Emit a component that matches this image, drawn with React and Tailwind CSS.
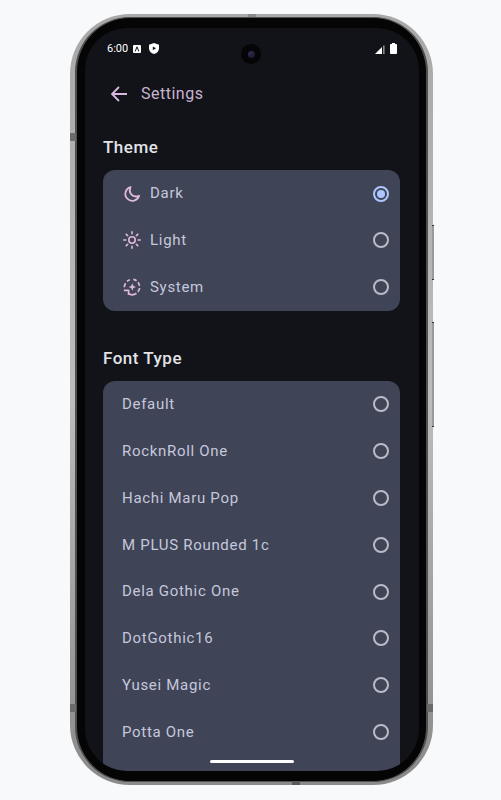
const FONTS = [
  "Default",
  "RocknRoll One",
  "Hachi Maru Pop",
  "M PLUS Rounded 1c",
  "Dela Gothic One",
  "DotGothic16",
  "Yusei Magic",
  "Potta One",
];

function MoonIcon() {
  return (
    <svg width="20" height="20" viewBox="0 0 20 20" fill="none" stroke="#e0b9d8" strokeWidth="1.8">
      <path d="M8.600 3a7 7 0 1 0 8.500 8.700c-.9.500-1.900.8-3 .8A6.300 6.300 0 0 1 8.600 3Z" strokeLinejoin="round" />
    </svg>
  );
}

function SunIcon() {
  return (
    <svg width="20" height="20" viewBox="0 0 20 20" fill="none" stroke="#e0b9d8" strokeWidth="1.600" strokeLinecap="round">
      <circle cx="10" cy="10" r="3.200" />
      <path d="M10 1.800v2M10 16.200v2M1.800 10h2M16.200 10h2M4.200 4.200l1.400 1.400M14.400 14.400l1.400 1.400M4.200 15.800l1.400-1.400M14.400 5.600l1.400-1.400" />
    </svg>
  );
}

function SystemIcon() {
  return (
    <svg width="20" height="20" viewBox="0 0 20 20" fill="none" stroke="#e0b9d8" strokeWidth="1.700">
      <path d="M2.300 10.200a7.700 7.700 0 0 1 1.300-4M5 4.400a7.700 7.700 0 0 1 2.900-1.600M11.300 2.400a7.700 7.700 0 0 1 3.300 1.400M16 5.300a7.700 7.700 0 0 1 1.500 3.600M17.600 11a7.700 7.700 0 0 1-1.700 3.900M14.500 16.300a7.700 7.700 0 0 1-8.400.300" />
      <path d="M1.900 13.300h4.700v4.500" strokeLinejoin="round" />
      <path d="M10.300 6.200l1.100 2.700 2.700 1.100-2.700 1.100-1.100 2.700-1.100-2.700-2.700-1.100 2.700-1.100Z" fill="#e0b9d8" stroke="none" />
    </svg>
  );
}

function Radio({ checked }) {
  if (checked) {
    return (
      <span className="flex h-4 w-4 items-center justify-center rounded-full border-2 border-[#adc6ff]">
        <span className="h-2 w-2 rounded-full bg-[#adc6ff]"></span>
      </span>
    );
  }
  return <span className="h-4 w-4 rounded-full border-2 border-[#b9bbc6]"></span>;
}

function Row({ icon, label, checked }) {
  return (
    <div className="flex h-[46.8px] shrink-0 items-center pl-[19px] pr-[11px]">
      {icon ? <span className="mr-[8px] flex h-5 w-5 items-center justify-center">{icon}</span> : null}
      <span className="flex-1 text-[15px] tracking-[0.7px] text-[#c5c8dc]">{label}</span>
      <Radio checked={checked} />
    </div>
  );
}

export default function App() {
  return (
    <div className="h-screen overflow-hidden bg-[#f8f9fb] pt-[14px] pl-[70px] font-['Roboto',sans-serif]">
      <div className="relative h-[771px] w-[363px] rounded-[60px] bg-gradient-to-b from-[#a8a8a8] via-[#bcbcbc] to-[#8a8a8a] px-[5px] py-[3px]">
        {/* side buttons and antenna bands */}
        <div className="absolute -right-[1px] top-[211px] h-[55px] w-[2px] border-y border-[#333] bg-[#9a9a9a]"></div>
        <div className="absolute -right-[1px] top-[308px] h-[105px] w-[2px] border-y border-[#333] bg-[#9a9a9a]"></div>
        <div className="absolute left-0 top-[119px] h-2 w-[6px] bg-[#6a6a6a]"></div>
        <div className="absolute left-0 top-[690px] h-2 w-[6px] bg-[#6a6a6a]"></div>
        <div className="absolute right-0 top-[690px] h-2 w-[6px] bg-[#6a6a6a]"></div>
        <div className="absolute left-[178px] top-0 h-[3px] w-2 bg-[#8a8a8a]"></div>
        <div className="absolute bottom-0 left-[222px] h-[4px] w-2 bg-[#5a5a5a]"></div>

        <div className="h-full w-full rounded-[55px] bg-[#050505] border-x-2 border-y border-[#4f4f4f]">
          <div className="h-full w-full pb-[10px] pl-[8px] pr-[7px] pt-[10px]">
            <div className="relative flex h-full w-full flex-col overflow-hidden rounded-[42px] bg-[#111318]">
              {/* camera */}
              <div className="absolute left-[156px] top-[16px] flex h-5 w-5 items-center justify-center rounded-full bg-[#050507]">
                <span className="h-[7px] w-[7px] rounded-full bg-gradient-to-br from-[#3a3160] to-[#15131f]"></span>
              </div>

              {/* status bar */}
              <div className="flex h-[41px] shrink-0 items-center justify-between px-[22px] text-white">
                <div className="flex items-center gap-[5px]">
                  <span className="text-[11px] leading-none">6:00</span>
                  <svg width="8" height="8" viewBox="0 0 8 8">
                    <rect width="8" height="8" rx="1" fill="#fff" />
                    <path d="M2.200 6.400 4 1.800l1.800 4.600" fill="none" stroke="#111318" strokeWidth="1" />
                  </svg>
                  <svg width="10" height="11" viewBox="0 0 10 11" className="ml-[3px]">
                    <path d="M5 0 10 1.800v3.600c0 2.600-2 4.600-5 5.600-3-1-5-3-5-5.600V1.800Z" fill="#fff" />
                    <path d="M3.800 3.400v3.800L7 5.300Z" fill="#111318" />
                  </svg>
                </div>
                <div className="flex items-center gap-[5px]">
                  <svg width="10" height="10" viewBox="0 0 10 10">
                    <path d="M0 10 7 3v7Z" fill="#fff" />
                    <path d="M8 1.500h1.600V10H8Z" fill="#8a8a8a" />
                  </svg>
                  <svg width="7" height="11" viewBox="0 0 7 11">
                    <path d="M2 0h3v1h1.200c.4 0 .8.300.8.800v8.400c0 .5-.4.800-.8.800H.8c-.4 0-.8-.3-.8-.8V1.800C0 1.300.4 1 .8 1H2Z" fill="#fff" />
                  </svg>
                </div>
              </div>

              {/* header */}
              <div className="flex h-[50px] shrink-0 items-center pl-[24px]">
                <svg width="20" height="20" viewBox="0 0 20 20" fill="none" stroke="#d9b8e0" strokeWidth="1.800">
                  <path d="M18 10H3M10 3l-7 7 7 7" />
                </svg>
                <span className="ml-[12px] text-base tracking-[0.5px] text-[#c8b3d0]">Settings</span>
              </div>

              <div className="flex min-h-0 flex-1 flex-col pl-[18px] pr-[19px]">
                <h2 className="mt-[16px] text-[17px] font-medium leading-[24px] tracking-[0.5px] text-[#e3e3e8]">Theme</h2>
                <div className="mt-[11px] flex h-[141px] shrink-0 flex-col justify-center rounded-xl bg-[#3f4457]">
                  <Row icon={<MoonIcon />} label="Dark" checked />
                  <Row icon={<SunIcon />} label="Light" />
                  <Row icon={<SystemIcon />} label="System" />
                </div>

                <h2 className="mt-[35px] text-[17px] font-medium leading-[24px] tracking-[0.5px] text-[#e3e3e8]">Font Type</h2>
                <div className="mt-[11px] flex shrink-0 flex-col rounded-xl bg-[#3f4457] pb-10">
                  {FONTS.map((name) => (
                    <Row key={name} label={name} />
                  ))}
                </div>
              </div>

              {/* gesture bar */}
              <div className="absolute bottom-[8px] left-[125px] h-[3px] w-[84px] rounded-full bg-white"></div>
            </div>
          </div>
        </div>
      </div>
    </div>
  );
}
